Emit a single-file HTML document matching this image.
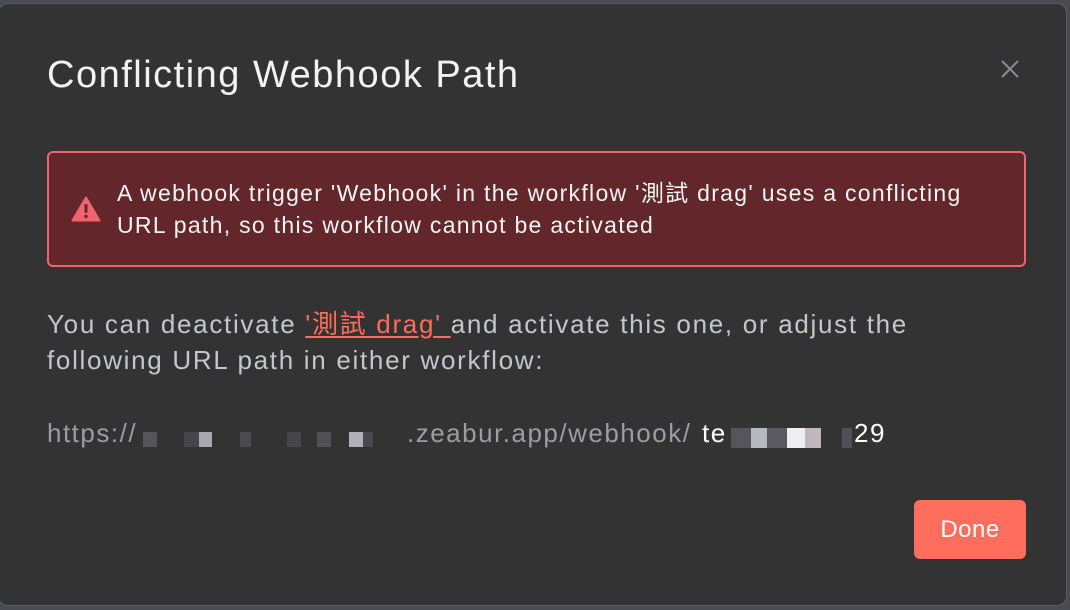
<!DOCTYPE html>
<html><head><meta charset="utf-8"><style>
html,body{margin:0;padding:0;width:1070px;height:610px;overflow:hidden;background:#4a4a52;font-family:"Liberation Sans","Noto Sans CJK TC",sans-serif;}
.dlg{position:absolute;left:-2px;top:3px;width:1069px;height:603px;background:#333333;border:1px solid #5a5a62;border-radius:10px;box-sizing:border-box;}
.title{position:absolute;left:47px;top:54px;font-size:38px;letter-spacing:1.5px;color:#f2f2f2;white-space:nowrap;}
.x{position:absolute;left:1000px;top:59px;}
.alert{position:absolute;left:47px;top:151px;width:979px;height:116px;box-sizing:border-box;background:#63272b;border:2px solid #f0646e;border-radius:6px;}
.alert .t{position:absolute;left:68px;top:24px;font-size:23px;letter-spacing:1.3px;line-height:32px;color:#f4f4f4;white-space:nowrap;}
.ic{position:absolute;left:22px;top:43px;}
.body{position:absolute;left:47px;top:306px;font-size:26px;letter-spacing:1.7px;line-height:36px;color:#c4c5cd;white-space:nowrap;}
.body a{color:#ff6d5a;text-decoration:underline;text-underline-offset:3px;}
.url{position:absolute;left:47px;top:418px;font-size:26px;letter-spacing:1.5px;color:#9c9ca4;white-space:nowrap;height:30px;}
.url span{position:absolute;top:0;}
.px{position:absolute;height:15px;top:14px;}
.btn{position:absolute;left:914px;top:500px;width:112px;height:59px;background:#ff6e5c;border-radius:6px;color:#fff;font-size:24px;letter-spacing:0.5px;text-align:center;line-height:59px;}
</style></head><body>
<div class="dlg"></div>
<div class="title">Conflicting Webhook Path</div>
<svg class="x" width="20" height="20" viewBox="0 0 20 20"><path d="M2 2L18 18M18 2L2 18" stroke="#8c8c94" stroke-width="2"/></svg>
<div class="alert">
<svg class="ic" width="30" height="26" viewBox="0 0 30 26"><path d="M15 1.5L28.5 24.5H1.5Z" fill="#f0646e" stroke="#f0646e" stroke-width="2" stroke-linejoin="round"/><rect x="13.5" y="8" width="3" height="9" rx="1.2" fill="#63272b"/><circle cx="15" cy="20.5" r="1.7" fill="#63272b"/></svg>
<div class="t">A webhook trigger 'Webhook' in the workflow '測試 drag' uses a conflicting<br>URL path, so this workflow cannot be activated</div>
</div>
<div class="body">You can deactivate <a>'測試 drag' </a>and activate this one, or adjust the<br>following URL path in either workflow:</div>
<div class="url">
<span style="left:0">https://</span>
<div class="px" style="left:96px;width:14px;background:#55555b"></div>
<div class="px" style="left:137px;width:15px;background:#45454b"></div>
<div class="px" style="left:152px;width:13px;background:#a8a8b0"></div>
<div class="px" style="left:193px;width:11px;background:#4a4a50"></div>
<div class="px" style="left:240px;width:14px;background:#45454b"></div>
<div class="px" style="left:270px;width:14px;background:#505056"></div>
<div class="px" style="left:302px;width:14px;background:#b0b0b8"></div>
<div class="px" style="left:316px;width:10px;background:#48484e"></div>
<span style="left:360px">.zeabur.app/webhook/</span>
<span style="left:655px;color:#fff">te</span>
<div class="px" style="left:684px;width:20px;background:#55555b;top:10px;height:20px"></div>
<div class="px" style="left:704px;width:16px;background:#b8b8c0;top:10px;height:20px"></div>
<div class="px" style="left:720px;width:20px;background:#5a5a60;top:10px;height:20px"></div>
<div class="px" style="left:740px;width:18px;background:#eeeef2;top:10px;height:20px"></div>
<div class="px" style="left:758px;width:16px;background:#c0b8bc;top:10px;height:20px"></div>
<div class="px" style="left:795px;width:10px;background:#505058;top:10px;height:20px"></div>
<span style="left:807px;color:#fff">29</span>
</div>
<div class="btn">Done</div>
</body></html>
